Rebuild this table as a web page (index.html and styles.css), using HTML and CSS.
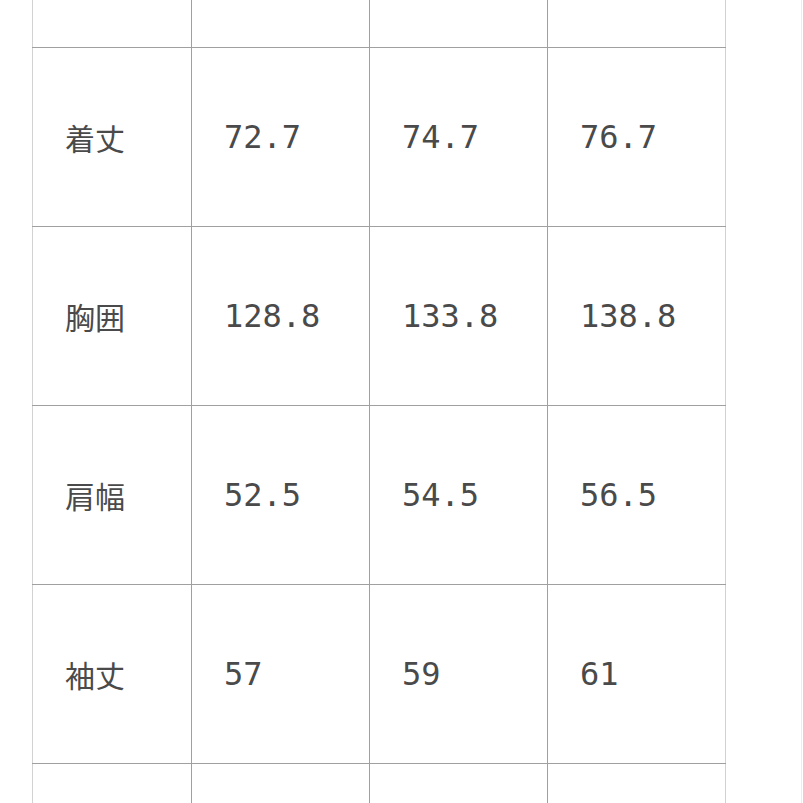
FILE: index.html
```html
<!DOCTYPE html>
<html lang="ja">
<head>
<meta charset="utf-8">
<title>サイズ表</title>
<link rel="stylesheet" href="styles.css">
</head>
<body>
<div class="sheet">
  <table class="size-table">
    <colgroup>
      <col class="c-label">
      <col class="c-val">
      <col class="c-val">
      <col class="c-val">
    </colgroup>
    <tbody>
      <tr class="row-cut-top"><td></td><td></td><td></td><td></td></tr>
      <tr><td class="label">着丈</td><td class="num">72.7</td><td class="num">74.7</td><td class="num">76.7</td></tr>
      <tr><td class="label">胸囲</td><td class="num">128.8</td><td class="num">133.8</td><td class="num">138.8</td></tr>
      <tr><td class="label">肩幅</td><td class="num">52.5</td><td class="num">54.5</td><td class="num">56.5</td></tr>
      <tr><td class="label">袖丈</td><td class="num">57</td><td class="num">59</td><td class="num">61</td></tr>
      <tr class="row-cut-bottom"><td></td><td></td><td></td><td></td></tr>
    </tbody>
  </table>
</div>
</body>
</html>
```
FILE: styles.css
```css
html, body {
  margin: 0;
  padding: 0;
  background: #ffffff;
  overflow: hidden;
}

.sheet {
  width: 802px;
  height: 803px;
  border-right: 1px solid #ececec;
  padding-left: 32px;
  box-sizing: border-box;
  overflow: hidden;
}

.size-table {
  border-collapse: collapse;
  table-layout: fixed;
  width: 694px;
  color: #4a4a4a;
}

.c-label { width: 159px; }
.c-val { width: 178px; }

.size-table td {
  border: 1px solid #a0a0a0;
  height: 179px;
  padding: 0 0 0 32px;
  vertical-align: middle;
  text-align: left;
  box-sizing: border-box;
}

.size-table td:first-child {
  border-left-color: #d2d2d2;
}

.size-table td:last-child {
  border-right-color: #d2d2d2;
}

.row-cut-top td {
  height: 47px;
  border-top: none;
}

.row-cut-bottom td {
  height: 60px;
}

.label {
  font-family: "Noto Sans CJK JP", "Noto Sans", sans-serif;
  font-size: 30px;
}

.num {
  font-family: "DejaVu Sans Mono", "Liberation Mono", monospace;
  font-size: 32px;
}
```
